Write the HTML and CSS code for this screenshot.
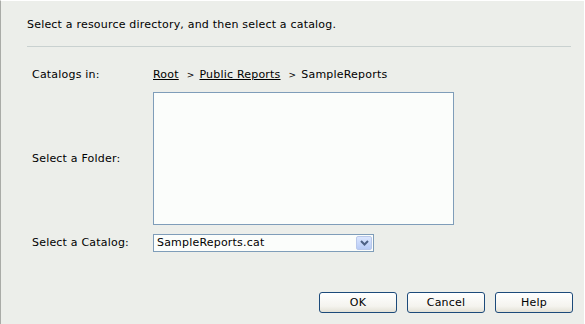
FILE: index.html
```html
<!DOCTYPE html>
<html>
<head>
<meta charset="utf-8">
<link rel="stylesheet" href="styles.css">
</head>
<body>
<div class="dialog">
  <p class="intro">Select a resource directory, and then select a catalog.</p>
  <div class="divider"></div>
  <div class="form">
    <div class="row crumbs-row">
      <span class="label">Catalogs in:</span>
      <span class="crumbs">
        <a class="crumb" href="#">Root</a>
        <span class="sep">&gt;</span>
        <a class="crumb" href="#">Public Reports</a>
        <span class="sep">&gt;</span>
        <span class="current">SampleReports</span>
      </span>
    </div>
    <div class="row folder-row">
      <span class="label">Select a Folder:</span>
      <div class="listbox"></div>
    </div>
    <div class="row catalog-row">
      <span class="label">Select a Catalog:</span>
      <div class="select">
        <span class="select-value">SampleReports.cat</span>
        <span class="select-btn">
          <svg width="9" height="6" viewBox="0 0 9 6"><path d="M1 1 L4.5 4.5 L8 1" fill="none" stroke="#4d6185" stroke-width="2"/></svg>
        </span>
      </div>
    </div>
  </div>
  <div class="buttons">
    <button class="btn">OK</button>
    <button class="btn">Cancel</button>
    <button class="btn">Help</button>
  </div>
</div>
</body>
</html>
```
FILE: styles.css
```css
html, body {
  margin: 0;
  padding: 0;
}
body {
  width: 585px;
  height: 324px;
  overflow: hidden;
  background: #eceeea;
  font-family: "DejaVu Sans", Verdana, sans-serif;
  font-size: 11px;
  letter-spacing: 0.2px;
  color: #000;
}
.dialog {
  box-sizing: border-box;
  width: 585px;
  height: 324px;
  border-left: 1px solid #a9aba7;
  border-right: 1px solid #ffffff;
  border-top: 1px solid #ffffff;
  padding: 17px 11px 0 26px;
  display: flex;
  flex-direction: column;
}
.intro {
  margin: 0;
  line-height: 14px;
  height: 14px;
}
.divider {
  margin-top: 14px;
  height: 1px;
  background: #c9d1d0;
  margin-right: 2px;
}
.form {
  margin-top: 21px;
  padding-left: 5px;
  display: flex;
  flex-direction: column;
}
.row {
  display: flex;
  align-items: center;
}
.label {
  width: 121px;
  flex: none;
  line-height: 14px;
}
.crumbs-row {
  height: 14px;
}
.crumbs {
  display: flex;
  align-items: center;
  line-height: 14px;
}
.crumb {
  color: #000;
  text-decoration: underline;
}
.sep {
  font-size: 9px;
  margin: 0 5px 0 8px;
}
.folder-row {
  margin-top: 10px;
}
.listbox {
  box-sizing: border-box;
  width: 301px;
  height: 133px;
  border: 1px solid #7f9db9;
  background: #fbfdfb;
}
.catalog-row {
  margin-top: 9px;
}
.select {
  box-sizing: border-box;
  width: 221px;
  height: 18px;
  border: 1px solid #7f9db9;
  background: #fbfdfb;
  display: flex;
  align-items: center;
  justify-content: space-between;
  padding: 0 1px 0 3px;
}
.select-value {
  font-size: 11px;
  line-height: 14px;
}
.select-btn {
  box-sizing: border-box;
  width: 16px;
  height: 14px;
  border: 1px solid #b9c8ea;
  border-radius: 2px;
  background: linear-gradient(#dbe6fe, #b7cbf6);
  display: flex;
  align-items: center;
  justify-content: center;
}
.buttons {
  margin-top: auto;
  margin-bottom: 11px;
  display: flex;
  justify-content: flex-end;
  gap: 10px;
}
.btn {
  box-sizing: border-box;
  width: 78px;
  height: 21px;
  border: 1px solid #1c4a7a;
  border-radius: 3px;
  background: linear-gradient(#ffffff, #f4f3ee 70%, #e3e1d6);
  font-family: "DejaVu Sans", Verdana, sans-serif;
  font-size: 11px;
  font-weight: normal;
  letter-spacing: 0.2px;
  color: #000;
  padding: 0;
}
```
